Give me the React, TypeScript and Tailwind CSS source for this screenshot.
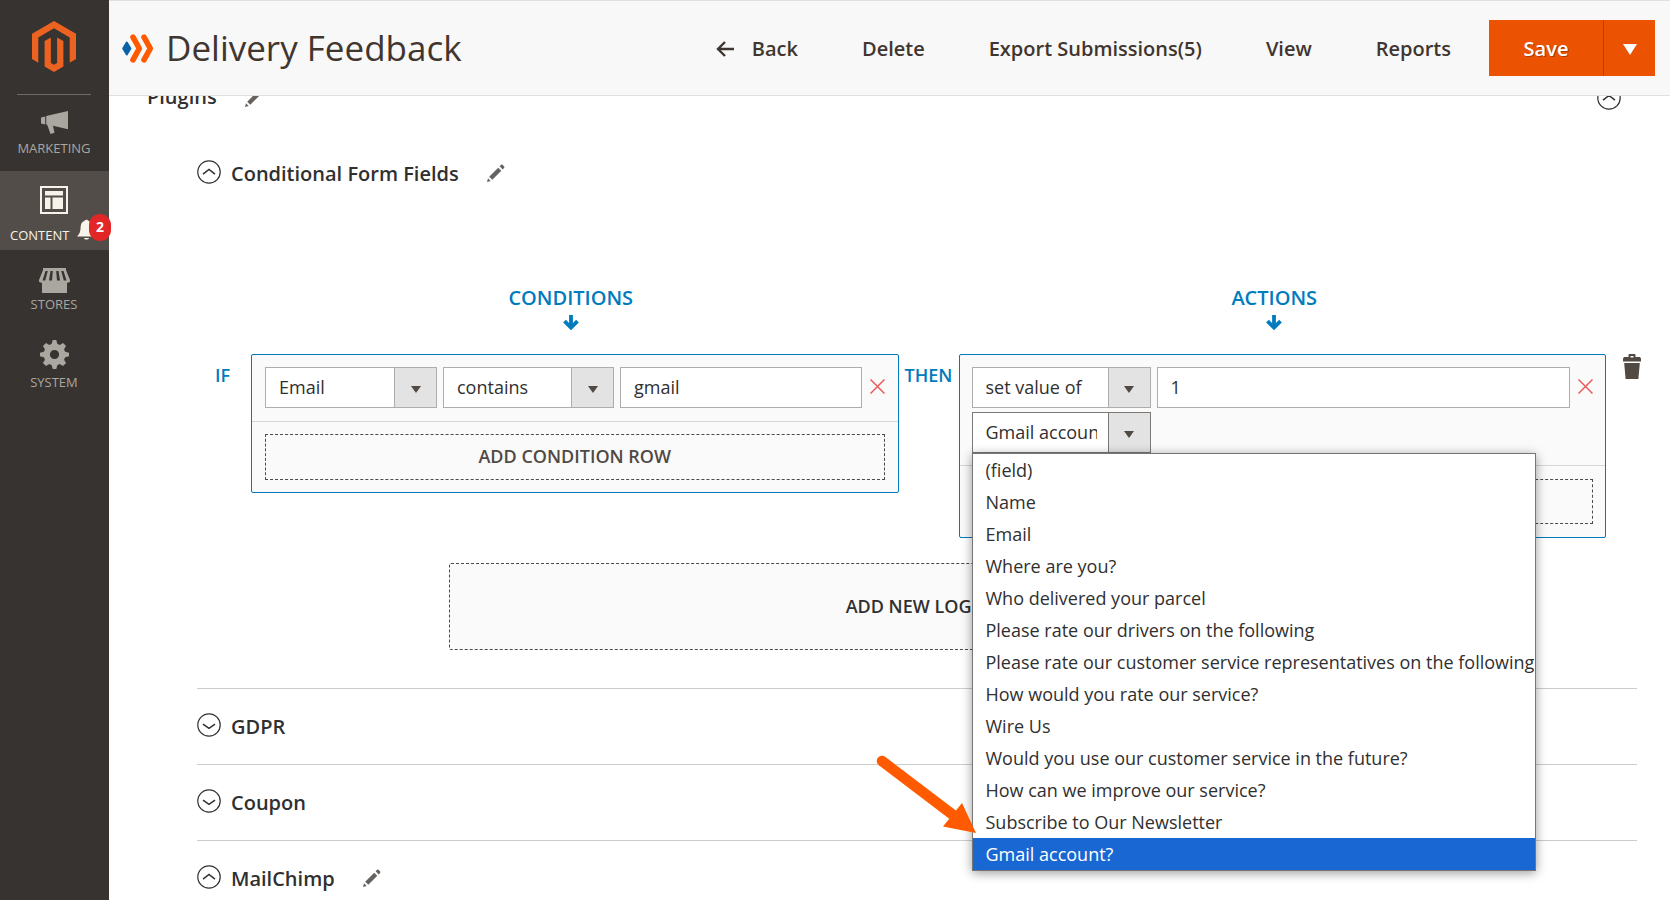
import React, { useState } from 'react';

const FIELDS = [
    '(field)',
    'Name',
    'Email',
    'Where are you?',
    'Who delivered your parcel',
    'Please rate our drivers on the following',
    'Please rate our customer service representatives on the following',
    'How would you rate our service?',
    'Wire Us',
    'Would you use our customer service in the future?',
    'How can we improve our service?',
    'Subscribe to Our Newsletter',
    'Gmail account?',
];

const Pencil: React.FC = () => (
    <svg width="18" height="18" viewBox="0 0 18 18" fill="#666260">
        <path d="M0 18l1-3.800L3.700 17z" />
        <path d="M2.200 12.700l9-9L14.300 6.800l-9 9z" />
        <path d="M12.600 2.300l1.300-1.300c.6-.6 1.200-.6 1.800 0L17 2.300c.6.6.6 1.200 0 1.800l-1.300 1.300z" />
    </svg>
);

const Chevron: React.FC<{ open?: boolean }> = ({ open }) => (
    <svg width="24" height="24" viewBox="0 0 24 24" fill="none" stroke="#303030" strokeWidth="1.2">
        <circle cx="12" cy="12" r="11.200" />
        {open ? <path d="M6 14.200l6-4.700 6 4.700" strokeWidth="1.500" /> : <path d="M6 11.200l6 4.200 6-4.200" strokeWidth="1.500" />}
    </svg>
);

const DownArrow: React.FC = () => (
    <svg width="16" height="16" viewBox="0 0 16 16" fill="none" stroke="#007bbd" strokeWidth="3.800">
        <path d="M8 0v12" />
        <path d="M1.500 6.200L8 12.600l6.500-6.400" />
    </svg>
);

const RemoveButton: React.FC = () => (
    <button aria-label="Remove" className="flex w-[17px] shrink-0 items-center justify-end pb-[2px]">
        <svg width="15" height="15" viewBox="0 0 15 15" stroke="#ea5b5b" strokeWidth="1.500">
            <path d="M.5.5l14 14M14.500.5l-14 14" />
        </svg>
    </button>
);

const Dropdown: React.FC<{ label: string; options: string[]; initial: string; active?: boolean }> = ({ label, options, initial, active }) => {
    const [value, setValue] = useState(initial);
    return (
        <div className="relative">
            <select
                aria-label={label}
                value={value}
                onChange={(e) => setValue(e.target.value)}
                className={`block h-[41px] w-full appearance-none overflow-hidden border bg-white pb-[2px] pl-[13px] pr-[53px] text-lg outline-none ${active ? 'border-[#7d7874]' : 'border-[#adadad]'}`}
            >
                {options.map((o) => <option key={o}>{o}</option>)}
            </select>
            <span className={`pointer-events-none absolute inset-y-0 right-0 flex w-[43px] items-center justify-center border bg-[#e3e3e3] pt-[3px] ${active ? 'border-[#7d7874]' : 'border-[#adadad]'}`}>
                <svg width="10" height="7" viewBox="0 0 10 7" fill="#514943"><path d="M0 0h10L5 7z" /></svg>
            </span>
        </div>
    );
};

const TextField: React.FC<{ label: string; text: string }> = ({ label, text }) => (
    <input
        aria-label={label}
        defaultValue={text}
        className="h-[41px] w-full min-w-0 flex-1 border border-[#adadad] bg-white px-[13px] pb-[2px] text-lg outline-none"
    />
);

const Section: React.FC<{ title: string; open?: boolean; editable?: boolean }> = ({ title, open, editable }) => (
    <div className="flex h-[76px] items-center pb-1">
        <button className="flex items-center gap-2.5" aria-expanded={!!open}>
            <Chevron open={open} />
            <span className="pt-1 text-xl font-semibold">{title}</span>
        </button>
        {editable && <button aria-label={`Rename ${title}`} className="ml-7 pt-[2px]"><Pencil /></button>}
    </div>
);

const Sidebar: React.FC = () => (
    <nav className="flex w-[109px] shrink-0 flex-col bg-[#373330] text-[13px] leading-4 text-[#aaa6a0]">
        <a href="#dashboard" aria-label="Dashboard" className="ml-[17px] mr-[18px] flex h-[95px] justify-center border-b border-[#736963] pt-[21px]">
            <svg width="44" height="51" viewBox="0 0 44 51" fill="#ec6221">
                <path d="M22 0l22 12.700v25.400l-6.300 3.700V16.400L22 7.300 6.300 16.400v25.400L0 38.100V12.700z" />
                <path d="M12.600 20v25.400L22 51l9.400-5.600V20l-6.300-3.600v25.500L22 43.700l-3.100-1.800V16.400z" />
            </svg>
        </a>
        <a href="#marketing" className="flex h-[76px] flex-col items-center pr-px pt-4">
            <svg width="27" height="23" viewBox="0 0 27 23" fill="#aaa6a0">
                <path d="M0 6.500l4.200-1v8L0 12.500zM5.200 5L27 0v18.200l-15-3.400 1.500 7L9.500 23 6.200 13.800l-1-.3z" />
            </svg>
            <span className="mt-[6px]">MARKETING</span>
        </a>
        <a href="#content" className="relative flex h-[79px] flex-col items-center bg-[#524d49] pr-px pt-[15px] text-[#f7f3eb]">
            <svg width="28" height="28" viewBox="0 0 28 28" fill="#f7f3eb">
                <path fillRule="evenodd" d="M0 0h28v28H0zM2 2v24h24V2z" />
                <path d="M5 5h18v4.500H5zM5 11.500h5.500V23H5zM12.500 11.500H23V23H12.500z" />
            </svg>
            <span className="mt-[13px] flex w-full pl-[10px]">CONTENT</span>
            <svg className="absolute bottom-[10px] left-[77px]" width="19" height="21" viewBox="0 0 19 21" fill="#f7f3eb">
                <path d="M8 1.500C8 .5 11 .5 11 1.500 15 3 15.200 6 15.500 10c.2 3 1.200 5 3.500 7.500H0C2.300 15 3.300 13 3.500 10 3.800 6 4 3 8 1.500zM7 19h5c-.5 2-4.500 2-5 0z" />
            </svg>
            <span className="absolute -right-[2px] top-[43px] flex h-[27px] w-[22px] items-center justify-center rounded-[11px] bg-[#e22626] pb-[2px] text-sm font-bold text-white">2</span>
        </a>
        <a href="#stores" className="flex h-[78px] flex-col items-center pr-px pt-[18px]">
            <svg width="31" height="25" viewBox="0 0 31 25" fill="#aaa6a0">
                <path fillRule="evenodd" d="M4 0h23v2l4 10v1.500c-.6 1-2 1.500-3 1V25H3V14.500c-1 .5-2.400 0-3-1V12L4 2zM6.500 3L3.500 12.500h2.700L8.800 3zM11.500 3L10 12.500h3L13.800 3zM17.200 3l.8 9.500h3L19.500 3zM22.200 3l2.600 9.500h2.700L24.500 3z" />
            </svg>
            <span className="mt-[3px]">STORES</span>
        </a>
        <a href="#system" className="flex flex-col items-center pr-px pt-3">
            <svg width="29" height="29" viewBox="0 0 24 24" fill="#aaa6a0">
                <path fillRule="evenodd" d="M10.500 0h3l.8 3.200 2 .9L19 2.400 21.600 5l-1.700 2.700.9 2 3.200.8v3l-3.200.8-.9 2 1.700 2.700-2.600 2.600-2.700-1.700-2 .9-.8 3.200h-3l-.8-3.200-2-.9L5 21.600 2.400 19l1.700-2.700-.9-2L0 13.500v-3l3.200-.8.9-2L2.400 5 5 2.400l2.700 1.700 2-.9zM12 8.200a3.800 3.800 0 100 7.600 3.800 3.800 0 000-7.600z" />
            </svg>
            <span className="mt-[5px]">SYSTEM</span>
        </a>
    </nav>
);

const Header: React.FC = () => (
    <header className="z-10 flex h-24 shrink-0 items-center justify-between border-y border-[#e0e0e0] bg-[#f8f8f8] pl-[13px] pr-[15px] text-[#41362f]">
        <div className="flex items-center gap-3">
            <svg width="32" height="29" viewBox="0 0 32 29" fill="none" stroke="#ff5a00" strokeWidth="5.600" strokeLinecap="round" strokeLinejoin="round">
                <path d="M4.800 8.500l3.600 6-3.600 6-3.600-6z" fill="#0a63a8" stroke="#0a63a8" strokeWidth="2" />
                <path d="M11 3.200l6.300 11.300L11 25.800M22 3.200l6.300 11.300L22 25.800" />
            </svg>
            <h1 className="whitespace-nowrap text-[35px] leading-10">Delivery Feedback</h1>
        </div>
        <div className="flex items-center text-xl font-semibold">
            <div className="mr-[38px] flex items-center gap-16 whitespace-nowrap pt-[2px]">
                <button className="flex items-center gap-[18px]">
                    <svg width="18" height="16" viewBox="0 0 18 16" fill="none" stroke="#41362f" strokeWidth="2.400">
                        <path d="M18 8H2M9 1L2 8l7 7" />
                    </svg>
                    Back
                </button>
                <button>Delete</button>
                <button>Export Submissions(5)</button>
                <button>View</button>
                <button>Reports</button>
            </div>
            <div className="flex h-14 text-white">
                <button className="w-[114px] bg-[#eb5202] pt-[2px] text-shadow-[1px_1px_0_#0000004d]">Save</button>
                <button aria-label="More save options" className="flex w-[52px] items-center justify-center border-l border-[#b84002] bg-[#eb5202] pt-[2px]">
                    <svg width="14" height="11" viewBox="0 0 14 11" fill="#fff"><path d="M0 0h14L7 11z" /></svg>
                </button>
            </div>
        </div>
    </header>
);

const RuleEditor: React.FC = () => (
    <div className="mt-[72px] grid grid-cols-[54px_1fr_60px_1fr_31px] text-lg font-semibold text-[#007bbd]">
        <div className="col-start-2 flex h-[70px] flex-col items-center pr-2 text-xl leading-7">
            CONDITIONS
            <span className="mt-[3px]"><DownArrow /></span>
        </div>
        <div className="col-start-4 flex h-[70px] flex-col items-center pr-4 text-xl leading-7">
            ACTIONS
            <span className="mt-[3px]"><DownArrow /></span>
        </div>

        <span className="col-start-1 pl-[18px] pt-[7px]">IF</span>
        <div className="self-start rounded-xs border border-[#007bbd] bg-[#fafafa] font-normal text-[#303030]">
            <div className="flex gap-[6px] border-b border-[#d6d6d6] px-[13px] pb-[13px] pt-3">
                <div className="w-[172px] shrink-0"><Dropdown label="Condition field" options={FIELDS} initial="Email" /></div>
                <div className="w-[171px] shrink-0"><Dropdown label="Operator" options={['contains', 'equals']} initial="contains" /></div>
                <TextField label="Condition value" text="gmail" />
                <RemoveButton />
            </div>
            <div className="px-[13px] py-3">
                <button className="h-[46px] w-full border border-dashed border-[#514943] pb-[2px] font-semibold text-[#514943]">ADD CONDITION ROW</button>
            </div>
        </div>
        <span className="pt-[7px] text-center">THEN</span>
        <div className="self-start rounded-xs border border-[#007bbd] bg-[#fafafa] font-normal text-[#303030]">
            <div className="border-b border-[#d6d6d6] px-3 pb-3 pt-3">
                <div className="flex gap-[6px]">
                    <div className="w-[179px] shrink-0"><Dropdown label="Action" options={['set value of', 'show', 'hide']} initial="set value of" /></div>
                    <TextField label="Action value" text="1" />
                    <RemoveButton />
                </div>
                <div className="relative mt-1 w-[179px]">
                    <Dropdown label="Target field" options={FIELDS} initial="Gmail account?" active />
                    <FieldList />
                </div>
            </div>
            <div className="px-3 py-[13px]">
                <button className="h-[45px] w-full border border-dashed border-[#514943] pb-[2px] font-semibold text-[#514943]">ADD ACTION ROW</button>
            </div>
        </div>
        <button aria-label="Delete logic" className="flex items-start justify-end">
            <svg className="-mr-1" width="18" height="25" viewBox="0 0 18 25" fill="#514943">
                <path fillRule="evenodd" d="M5.500 3V1c0-.5.500-1 1-1h5c.5 0 1 .5 1 1v2H17l1 1.500v3H0v-3L1 3zM7.500 2v1.500h3V2z" />
                <path d="M1.200 9h15.600l-1.400 16H2.600z" />
            </svg>
        </button>
    </div>
);

// open list of the target field select, with the pointer at its last entry
const FieldList: React.FC = () => (
    <div className="absolute left-0 top-full z-20 w-[564px]">
        <ul role="listbox" aria-label="Fields" className="border border-[#767676] bg-white shadow-[0_2px_10px_#00000066]">
            {FIELDS.map((f) => (
                <li
                    key={f}
                    role="option"
                    aria-selected={f === 'Gmail account?'}
                    className="h-8 whitespace-nowrap pl-[13px] leading-8 aria-selected:bg-[#1967d2] aria-selected:text-white"
                >
                    {f}
                </li>
            ))}
        </ul>
        <svg className="absolute -left-[100px] top-[297px]" width="110" height="90" viewBox="0 0 110 90" fill="#ff5a00">
            <path d="M10 11l75 57" stroke="#ff5a00" strokeWidth="10.500" strokeLinecap="round" />
            <path d="M104 83L71 76.500 90 53z" />
        </svg>
    </div>
);

const App: React.FC = () => {
    return (
        <div className="flex h-screen overflow-hidden bg-white font-['Open_Sans',sans-serif] text-[#303030]">
            <Sidebar />
            <div className="flex min-w-0 flex-1 flex-col">
                <Header />
                <main className="min-h-0 flex-1 overflow-hidden pl-[38px] pr-[33px]">
                    <div className="-mt-[14px] flex h-8 items-center justify-between pr-4">
                        <div className="flex items-center gap-7">
                            <h2 className="pb-[2px] text-xl font-semibold">Plugins</h2>
                            <button aria-label="Rename Plugins"><Pencil /></button>
                        </div>
                        <button aria-label="Collapse Plugins"><Chevron open /></button>
                    </div>
                    <div className="pl-[50px]">
                        <div className="mt-[22px]"><Section title="Conditional Form Fields" open editable /></div>
                        <RuleEditor />
                        <button className="mx-auto mt-[25px] block h-[87px] w-[65%] rounded-xs border border-dashed border-[#514943] bg-[#fafafa] pb-[2px] text-lg font-semibold">ADD NEW LOGIC</button>
                        <div className="mt-[38px] divide-y divide-[#cccccc] border-t border-[#cccccc]">
                            <Section title="GDPR" />
                            <Section title="Coupon" />
                            <Section title="MailChimp" open editable />
                        </div>
                    </div>
                </main>
            </div>
        </div>
    );
};

export default App;
